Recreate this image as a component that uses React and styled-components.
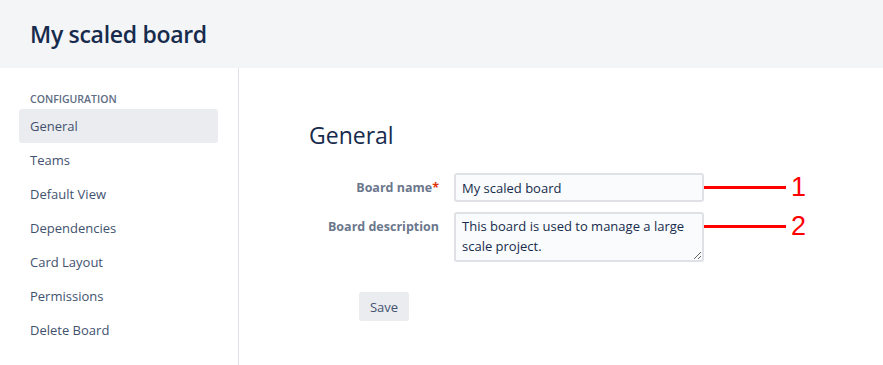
import React from 'react';
import styled, { createGlobalStyle } from 'styled-components';

const GlobalStyle = createGlobalStyle`
  html, body {
    margin: 0;
    padding: 0;
    background: #fff;
    font-family: "Open Sans", "Noto Sans", Arial, sans-serif;
  }
`;

const menu = ['General', 'Teams', 'Default View', 'Dependencies', 'Card Layout', 'Permissions', 'Delete Board'];

const App = () => {
  return (
    <>
      <GlobalStyle />
      <styles.Page>
        <styles.Header>
          <h1>My scaled board</h1>
        </styles.Header>
        <styles.Body>
          <styles.Sidebar>
            <styles.SectionTitle>Configuration</styles.SectionTitle>
            {menu.map((item, i) => (
              <styles.NavItem key={item} $active={i === 0}>{item}</styles.NavItem>
            ))}
          </styles.Sidebar>
          <styles.Main>
            <styles.Heading>General</styles.Heading>
            <styles.FormRow>
              <styles.Label>Board name<span>*</span></styles.Label>
              <styles.Input defaultValue="My scaled board" />
              <styles.Callout>
                <styles.CalloutLine />
                <styles.CalloutNumber>1</styles.CalloutNumber>
              </styles.Callout>
            </styles.FormRow>
            <styles.FormRow>
              <styles.Label>Board description</styles.Label>
              <styles.TextArea defaultValue="This board is used to manage a large scale project." />
              <styles.Callout>
                <styles.CalloutLine />
                <styles.CalloutNumber>2</styles.CalloutNumber>
              </styles.Callout>
            </styles.FormRow>
            <styles.Actions>
              <styles.Button>Save</styles.Button>
            </styles.Actions>
          </styles.Main>
        </styles.Body>
      </styles.Page>
    </>
  );
};

const styles = {};

styles.Page = styled.div`
  width: 883px;
  height: 365px;
  overflow: hidden;
  display: flex;
  flex-direction: column;
`;

styles.Header = styled.header`
  background: #f4f5f7;
  height: 68px;
  flex-shrink: 0;
  display: flex;
  align-items: center;
  padding-left: 30px;
  h1 {
    margin: 0;
    font-size: 23px;
    font-weight: 600;
    color: #172b4d;
    letter-spacing: -0.3px;
  }
`;

styles.Body = styled.div`
  flex: 1;
  display: flex;
`;

styles.Sidebar = styled.nav`
  width: 239px;
  box-sizing: border-box;
  border-right: 1px solid #dfe1e6;
  padding: 25px 20px 0 19px;
  display: flex;
  flex-direction: column;
`;

styles.SectionTitle = styled.div`
  font-size: 10.5px;
  font-weight: 600;
  text-transform: uppercase;
  color: #5e6c84;
  padding-left: 11px;
  height: 16px;
  line-height: 12px;
`;

styles.NavItem = styled.div`
  height: 34px;
  line-height: 34px;
  padding-left: 11px;
  font-size: 13px;
  color: #42526e;
  border-radius: 3px;
  background: ${p => (p.$active ? '#ebecf0' : 'transparent')};
`;

styles.Main = styled.main`
  flex: 1;
  padding: 50px 0 0 70px;
  display: flex;
  flex-direction: column;
`;

styles.Heading = styled.h2`
  margin: 0 0 20px;
  font-size: 23px;
  font-weight: 400;
  color: #172b4d;
  line-height: 35px;
`;

styles.FormRow = styled.div`
  display: flex;
  align-items: flex-start;
  margin-bottom: 10px;
`;

styles.Label = styled.label`
  width: 130px;
  text-align: right;
  padding: 6px 15px 0 0;
  font-size: 12.5px;
  font-weight: 700;
  color: #6b778c;
  line-height: 18px;
  span {
    color: #de350b;
  }
`;

const field = `
  width: 250px;
  box-sizing: border-box;
  border: 2px solid #dfe1e6;
  border-radius: 3px;
  background: #fafbfc;
  font-family: "Open Sans", "Noto Sans", Arial, sans-serif;
  font-size: 13px;
  color: #172b4d;
  padding: 4px 6px;
  outline: none;
`;

styles.Input = styled.input`
  ${field}
  height: 29px;
`;

styles.TextArea = styled.textarea`
  ${field}
  height: 50px;
  line-height: 20px;
  padding-top: 2px;
  resize: vertical;
`;

styles.Callout = styled.div`
  display: flex;
  align-items: center;
  height: 29px;
`;

styles.CalloutLine = styled.div`
  width: 82px;
  height: 3px;
  background: #ff0000;
`;

styles.CalloutNumber = styled.span`
  margin-left: 5px;
  font-family: "Liberation Sans", Arial, sans-serif;
  font-size: 27px;
  color: #ff0000;
  line-height: 29px;
`;

styles.Actions = styled.div`
  padding: 20px 0 0 50px;
`;

styles.Button = styled.button`
  height: 29px;
  width: 50px;
  padding: 0;
  border: none;
  border-radius: 3px;
  background: #ebecf0;
  color: #42526e;
  font-family: "Open Sans", "Noto Sans", Arial, sans-serif;
  font-size: 13px;
`;

export default App;
